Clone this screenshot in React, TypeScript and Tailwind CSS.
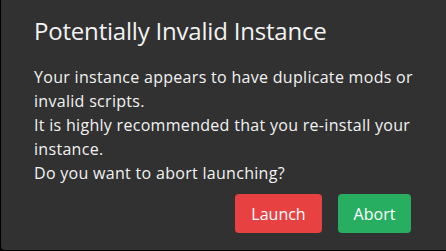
export default function App() {
  return (
    <div className="w-[446px] h-[251px] bg-black">
      <div
        className="w-[445px] h-[250px] ml-[1px] bg-[#313131] rounded-bl-[4px] text-[#f2f2f2] pl-[33px] pr-[35px] pt-[15px]"
        style={{ fontFamily: '"Open Sans", Lato, sans-serif' }}
      >
        <h1 className="text-[24px] leading-[32px] font-normal tracking-[-0.2px]">
          Potentially Invalid Instance
        </h1>
        <div className="mt-[18px] text-[16px] leading-[24px] w-[390px] tracking-[0.3px]">
          <p>Your instance appears to have duplicate mods or invalid scripts.</p>
          <p>It is highly recommended that you re-install your instance.</p>
          <p>Do you want to abort launching?</p>
        </div>
        <div className="flex justify-end gap-4 mt-[9px]">
          <button className="w-[87px] h-[39px] rounded-[4px] bg-[#e84142] text-white text-[16px]">
            Launch
          </button>
          <button className="w-[73px] h-[39px] rounded-[4px] bg-[#27ae60] text-white text-[16px]">
            Abort
          </button>
        </div>
      </div>
    </div>
  );
}
